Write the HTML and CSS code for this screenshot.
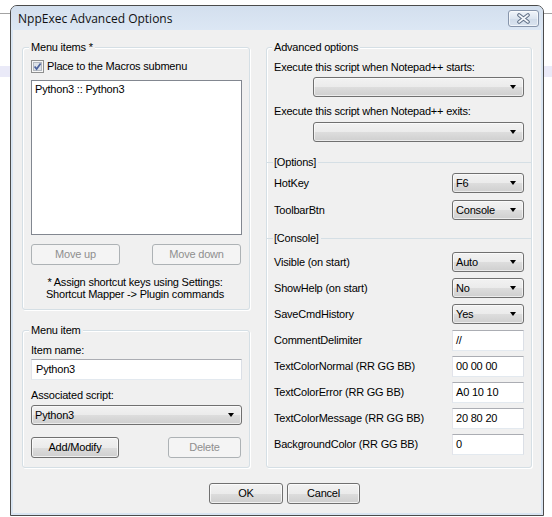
FILE: index.html
```html
<!DOCTYPE html>
<html>
<head>
<meta charset="utf-8">
<title>NppExec Advanced Options</title>
<link rel="stylesheet" href="styles.css">
</head>
<body>
<div class="window">
  <div class="titlebar">
    <span class="title">NppExec Advanced Options</span>
    <div class="close">
      <svg width="13" height="11" viewBox="0 0 13 11"><path d="M2 2 L11 9 M11 2 L2 9" stroke="#5f6f86" stroke-width="3.6" stroke-linecap="round" fill="none"/><path d="M2 2 L11 9 M11 2 L2 9" stroke="#f4f7fb" stroke-width="1.6" stroke-linecap="round" fill="none"/></svg>
    </div>
  </div>
  <div class="client">
    <div class="columns">
      <div class="leftcol">
        <div class="group g-items">
          <div class="legend">Menu items *</div>
          <div class="check">
            <span class="cb"><svg width="13" height="13" viewBox="0 0 13 13"><rect x="0.5" y="0.5" width="12" height="12" fill="#f6f6f6" stroke="#8e8f8f"/><rect x="2.5" y="2.5" width="8" height="8" fill="#dde2e8" stroke="#b4b9c0"/><path d="M3.6 6.4 L5.6 9 L9.6 3.4" stroke="#4d639d" stroke-width="1.7" fill="none"/></svg></span>
            <span>Place to the Macros submenu</span>
          </div>
          <div class="listbox"><div class="li">Python3 :: Python3</div></div>
          <div class="btnrow">
            <div class="btn disabled w89">Move up</div>
            <div class="btn disabled w89">Move down</div>
          </div>
          <p class="note">* Assign shortcut keys using Settings:<br>Shortcut Mapper -&gt; Plugin commands</p>
        </div>
        <div class="group g-item">
          <div class="legend">Menu item</div>
          <div class="lbl l-name">Item name:</div>
          <div class="edit e-name">Python3</div>
          <div class="lbl l-script">Associated script:</div>
          <div class="combo c-script">Python3<i class="arrow"></i></div>
          <div class="btnrow r-add">
            <div class="btn w88">Add/Modify</div>
            <div class="btn disabled w73">Delete</div>
          </div>
        </div>
      </div>
      <div class="group g-adv">
        <div class="legend">Advanced options</div>
        <div class="lbl l-start">Execute this script when Notepad++ starts:</div>
        <div class="combo c-wide c-start"><i class="arrow"></i></div>
        <div class="lbl l-exit">Execute this script when Notepad++ exits:</div>
        <div class="combo c-wide c-exit"><i class="arrow"></i></div>

        <div class="section s-options"><span>[Options]</span></div>
        <div class="row r-hotkey"><span>HotKey</span><div class="combo c-small">F6<i class="arrow"></i></div></div>
        <div class="row r-toolbar"><span>ToolbarBtn</span><div class="combo c-small">Console<i class="arrow"></i></div></div>

        <div class="section s-console"><span>[Console]</span></div>
        <div class="rows">
          <div class="row"><span>Visible (on start)</span><div class="combo c-small">Auto<i class="arrow"></i></div></div>
          <div class="row"><span>ShowHelp (on start)</span><div class="combo c-small">No<i class="arrow"></i></div></div>
          <div class="row"><span>SaveCmdHistory</span><div class="combo c-small">Yes<i class="arrow"></i></div></div>
          <div class="row"><span>CommentDelimiter</span><div class="edit e-small">//</div></div>
          <div class="row"><span>TextColorNormal (RR GG BB)</span><div class="edit e-small">00 00 00</div></div>
          <div class="row"><span>TextColorError (RR GG BB)</span><div class="edit e-small">A0 10 10</div></div>
          <div class="row"><span>TextColorMessage (RR GG BB)</span><div class="edit e-small">20 80 20</div></div>
          <div class="row"><span>BackgroundColor (RR GG BB)</span><div class="edit e-small">0</div></div>
        </div>
      </div>
    </div>
    <div class="footer">
      <div class="btn w74">OK</div>
      <div class="btn w73">Cancel</div>
    </div>
  </div>
</div>
</body>
</html>
```

FILE: styles.css
```css
* { box-sizing: border-box; }
html, body { margin: 0; padding: 0; }
body {
  width: 552px;
  height: 517px;
  overflow: hidden;
  padding: 5px 0 0 10px;
  font-family: "Liberation Sans", Arial, sans-serif;
  font-size: 11px;
  line-height: 13px;
  letter-spacing: -0.2px;
  color: #000;
  background:
    linear-gradient(#a3a3a3, #a3a3a3) 0 13px / 100% 1px no-repeat,
    linear-gradient(#eaeaf8, #eaeaf8) 0 66px / 100% 11px no-repeat,
    #ffffff;
}

.window {
  width: 534px;
  height: 511px;
  border: 1px solid #4b4b4b;
  border-radius: 7px 7px 0 0;
  background: #d9e5f2;
  display: flex;
  flex-direction: column;
}

.titlebar {
  height: 24px;
  flex: none;
  display: flex;
  align-items: flex-start;
  padding: 0 4px 0 7px;
  border-radius: 6px 6px 0 0;
  background: linear-gradient(#d3dfee, #dce7f4);
}
.title {
  font-family: "Open Sans", "Noto Sans", sans-serif;
  font-size: 12px;
  line-height: 22px;
  letter-spacing: 0;
  padding-top: 2px;
  color: #111;
}
.close {
  margin-left: auto;
  margin-top: 4px;
  width: 31px;
  height: 17px;
  border: 1px solid #8795ab;
  border-radius: 3px;
  background: linear-gradient(#f1f5fa, #dce5f0 50%, #d0dbe9 51%, #dae4f0);
  box-shadow: inset 0 0 0 1px rgba(255,255,255,0.6);
  display: flex;
  align-items: center;
  justify-content: center;
}
.close svg { display: block; }

.client {
  flex: 1;
  margin: 0 2px 2px;
  background: #f0f0f0;
  padding: 17px 9px 0;
}

.columns {
  display: flex;
  gap: 16px;
  align-items: flex-start;
}
.leftcol {
  width: 228px;
  display: flex;
  flex-direction: column;
  gap: 20px;
}

.group {
  border: 1px solid #d5dfe5;
  border-radius: 3px;
  box-shadow: inset 1px 1px 0 #fff, 1px 1px 0 #fff;
  display: flex;
  flex-direction: column;
  align-items: flex-start;
}
.legend {
  margin-top: -7px;
  margin-left: -2px;
  padding: 0 2px;
  background: #f0f0f0;
  height: 13px;
}

.g-items { height: 263px; padding: 0 7px 0 8px; }
.g-item { height: 138px; padding: 0 7px 0 8px; }
.g-adv { width: 266px; height: 421px; padding: 0 7px; }

.check {
  margin-top: 6px;
  height: 13px;
  display: flex;
  align-items: center;
}
.cb { width: 13px; height: 13px; margin-right: 3px; display: block; }
.cb svg { display: block; }

.listbox {
  margin-top: 7px;
  width: 211px;
  height: 155px;
  border: 1px solid #828790;
  background: #fff;
  padding: 2px 3px;
}

.btnrow {
  width: 211px;
  display: flex;
  justify-content: space-between;
  padding-right: 1px;
}
.g-items .btnrow { margin-top: 9px; }
.r-add { margin-top: 12px; }

.btn {
  height: 21px;
  border: 1px solid #707070;
  border-radius: 3px;
  background: linear-gradient(#f2f2f2, #ebebeb 50%, #dddddd 51%, #cfcfcf);
  box-shadow: inset 0 0 0 1px rgba(255,255,255,0.7);
  display: flex;
  align-items: center;
  justify-content: center;
}
.btn.disabled {
  border-color: #adb2b5;
  background: #f4f4f4;
  box-shadow: none;
  color: #8f8f8f;
}
.w89 { width: 89px; }
.w88 { width: 88px; }
.w74 { width: 74px; }
.w73 { width: 73px; }

.note {
  margin: 11px 0 0;
  width: 208px;
  text-align: center;
  line-height: 12px;
}

.lbl { height: 13px; }
.l-name { margin-top: 7px; }
.l-script { margin-top: 9px; }
.l-start { margin-top: 7px; }
.l-exit { margin-top: 8px; }

.edit {
  height: 21px;
  background: #fff;
  border: 1px solid;
  border-color: #abadb3 #dbdfe6 #e3e9ef #e2e3ea;
  padding-left: 3px;
  display: flex;
  align-items: center;
}
.e-name { margin-top: 2px; width: 211px; padding-left: 4px; }
.e-small { width: 72px; }

.combo {
  position: relative;
  height: 20px;
  border: 1px solid #707070;
  border-radius: 3px;
  background: linear-gradient(#f2f2f2, #ebebeb 50%, #dddddd 51%, #cfcfcf);
  box-shadow: inset 0 0 0 1px rgba(255,255,255,0.6);
  padding-left: 3px;
  display: flex;
  align-items: center;
}
.arrow {
  position: absolute;
  right: 7px;
  top: 7px;
  width: 0;
  height: 0;
  border-left: 3.5px solid transparent;
  border-right: 3.5px solid transparent;
  border-top: 4px solid #000;
}
.c-script { margin-top: 3px; width: 211px; }
.c-wide { width: 211px; margin-left: 39px; }
.c-start { margin-top: 3px; }
.c-exit { margin-top: 4px; }
.c-small { width: 72px; }

.section {
  margin: 0 -7px;
  align-self: stretch;
  height: 13px;
  display: flex;
  align-items: center;
}
.section::before {
  content: "";
  width: 6px;
  border-top: 1px solid #d5dfe5;
}
.section::after {
  content: "";
  flex: 1;
  border-top: 1px solid #d5dfe5;
}
.section span { padding: 0 2px 0 1px; }
.s-options { margin-top: 14px; }
.s-console { margin-top: 11px; }

.row {
  align-self: stretch;
  height: 21px;
  display: flex;
  align-items: center;
  justify-content: space-between;
}
.r-hotkey { margin-top: 4px; }
.r-toolbar { margin-top: 6px; }
.r-hotkey .combo, .r-toolbar .combo { align-self: flex-start; }

.rows {
  align-self: stretch;
  margin-top: 7px;
  display: flex;
  flex-direction: column;
  gap: 5px;
}
.rows .combo { align-self: flex-start; }

.footer {
  margin-top: 15px;
  padding-left: 187px;
  display: flex;
  gap: 4px;
}
```
